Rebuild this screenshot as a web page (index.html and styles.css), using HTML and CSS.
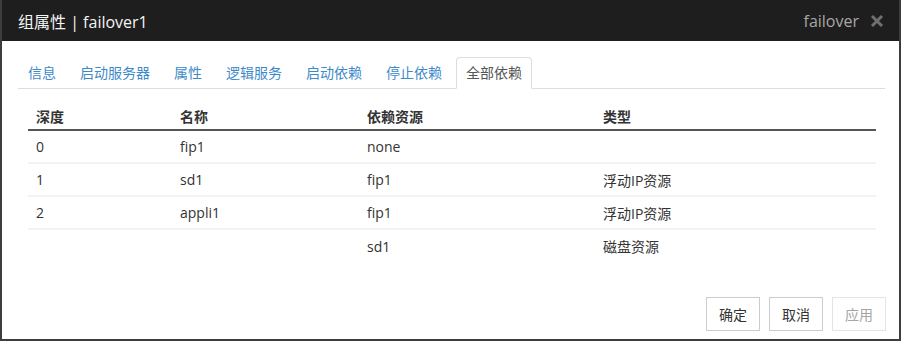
FILE: index.html
```html
<!DOCTYPE html>
<html lang="zh-CN">

<head>
    <meta charset="UTF-8">
    <meta name="viewport" content="width=device-width, initial-scale=1.0">
    <title>组属性 | failover1</title>
    <link rel="stylesheet" href="styles.css">
</head>

<body>
    <div class="dialog">
        <div class="dialog-header">
            <span class="dialog-title">组属性 | failover1</span>
            <span class="dialog-tools">
                <span class="group-type">failover</span>
                <svg class="close-icon" width="14" height="14" viewBox="0 0 14 14">
                    <path d="M2 2 L12 12 M12 2 L2 12" stroke="#6f6f6f" stroke-width="3" fill="none" />
                </svg>
            </span>
        </div>

        <div class="dialog-body">
            <ul class="tabs">
                <li class="tab">信息</li>
                <li class="tab">启动服务器</li>
                <li class="tab">属性</li>
                <li class="tab">逻辑服务</li>
                <li class="tab">启动依赖</li>
                <li class="tab">停止依赖</li>
                <li class="tab active">全部依赖</li>
            </ul>

            <table class="dep-table">
                <thead>
                    <tr>
                        <th class="col-depth">深度</th>
                        <th class="col-name">名称</th>
                        <th class="col-dep">依赖资源</th>
                        <th class="col-type">类型</th>
                    </tr>
                </thead>
                <tbody>
                    <tr>
                        <td>0</td>
                        <td>fip1</td>
                        <td>none</td>
                        <td></td>
                    </tr>
                    <tr>
                        <td>1</td>
                        <td>sd1</td>
                        <td>fip1</td>
                        <td>浮动IP资源</td>
                    </tr>
                    <tr>
                        <td>2</td>
                        <td>appli1</td>
                        <td>fip1</td>
                        <td>浮动IP资源</td>
                    </tr>
                    <tr>
                        <td></td>
                        <td></td>
                        <td>sd1</td>
                        <td>磁盘资源</td>
                    </tr>
                </tbody>
            </table>
        </div>

        <div class="dialog-footer">
            <button class="btn">确定</button>
            <button class="btn">取消</button>
            <button class="btn" disabled>应用</button>
        </div>
    </div>
</body>

</html>
```

FILE: styles.css
```css
/* dialog */

body {
    margin: 0;
    background-color: #fff;
    font-family: "Open Sans", "Noto Sans CJK SC", sans-serif;
    color: #333;
}

.dialog {
    width: 901px;
    height: 341px;
    box-sizing: border-box;
    border: 2px solid #3d3d3d;
    border-top: none;
    display: flex;
    flex-direction: column;
}

.dialog-header {
    height: 41px;
    background-color: #1e1e1e;
    display: flex;
    align-items: center;
    justify-content: space-between;
    padding: 0 15px 0 16px;
    flex-shrink: 0;
}

.dialog-title {
    color: #f4f4f4;
    font-size: 16px;
}

.dialog-tools {
    display: flex;
    align-items: center;
    gap: 11px;
}

.group-type {
    color: #a8a8a8;
    font-size: 16px;
}

.close-icon {
    display: block;
}

.dialog-body {
    padding: 16px 14px 0 16px;
}

.tabs {
    list-style: none;
    margin: 0;
    padding: 0;
    display: flex;
    border-bottom: 1px solid #ddd;
}

.tab {
    font-size: 14px;
    line-height: 30px;
    padding: 0 9px;
    margin-right: 4px;
    margin-bottom: -1px;
    color: #3d8ac9;
    border: 1px solid transparent;
    border-radius: 4px 4px 0 0;
}

.tab.active {
    color: #555;
    background-color: #fff;
    border-color: #ddd;
    border-bottom-color: #fff;
}

.dep-table {
    width: 848px;
    margin: 13px 0 0 10px;
    border-collapse: collapse;
    font-size: 14px;
}

.dep-table th {
    text-align: left;
    font-weight: bold;
    height: 28px;
    padding: 0 8px;
    border-bottom: 2px solid #555;
    box-sizing: border-box;
}

.dep-table td {
    height: 33px;
    padding: 0 8px;
    border-bottom: 2px solid #f3f3f3;
    box-sizing: border-box;
}

.dep-table tbody tr:last-child td {
    border-bottom: none;
}

.col-depth {
    width: 144px;
}

.col-name {
    width: 187px;
}

.col-dep {
    width: 236px;
}

.dialog-footer {
    margin-top: auto;
    display: flex;
    justify-content: flex-end;
    gap: 9px;
    padding: 0 13px 8px 0;
}

.btn {
    width: 54px;
    height: 34px;
    background-color: #fff;
    border: 1px solid #ccc;
    border-radius: 0;
    font-family: "Noto Sans CJK SC", sans-serif;
    font-size: 14px;
    color: #333;
    padding: 0;
}

.btn:disabled {
    border-color: #e4e4e4;
    color: #a5a5a5;
}
```
